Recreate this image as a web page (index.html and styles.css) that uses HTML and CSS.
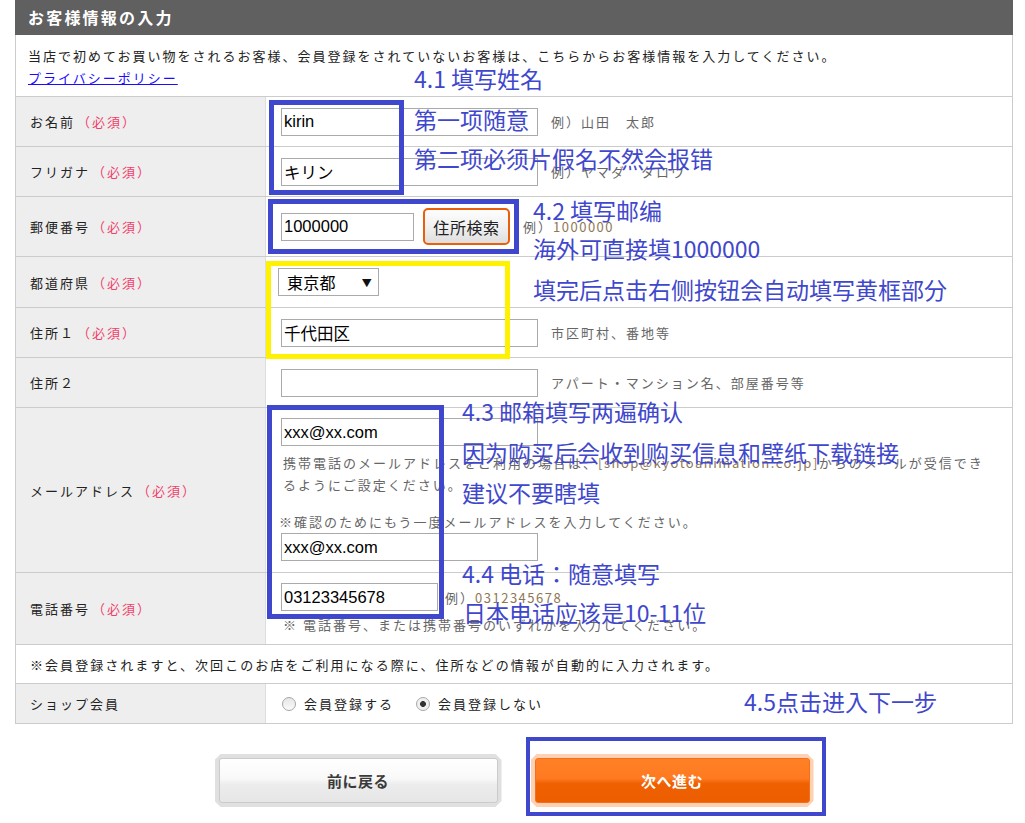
FILE: index.html
```html
<!DOCTYPE html>
<html lang="ja">
<head>
<meta charset="utf-8">
<title>お客様情報の入力</title>
<link rel="stylesheet" href="styles.css">
</head>
<body>
<div class="page">
  <div class="panel">
    <h1 class="panel-title">お客様情報の入力</h1>
    <div class="box">
      <div class="intro">
        <p>当店で初めてお買い物をされるお客様、会員登録をされていないお客様は、こちらからお客様情報を入力してください。</p>
        <a href="#" class="policy">プライバシーポリシー</a>
      </div>
      <div class="form">
        <div class="row h50">
          <div class="label">お名前<span class="req">（必須）</span></div>
          <div class="value"><input class="field w257" type="text" value="kirin" readonly><span class="ex">例）山田　太郎</span></div>
        </div>
        <div class="row h50">
          <div class="label">フリガナ<span class="req">（必須）</span></div>
          <div class="value"><input class="field w257" type="text" value="キリン" readonly><span class="ex">例）ヤマダ　タロウ</span></div>
        </div>
        <div class="row h60">
          <div class="label">郵便番号<span class="req">（必須）</span></div>
          <div class="value"><input class="field w133" type="text" value="1000000" readonly><span class="zip-btn">住所検索</span><span class="ex">例）<span class="lat">1000000</span></span></div>
        </div>
        <div class="row h51">
          <div class="label">都道府県<span class="req">（必須）</span></div>
          <div class="value"><div class="select"><span>東京都</span><span class="arrow">▼</span></div></div>
        </div>
        <div class="row h50">
          <div class="label">住所１<span class="req">（必須）</span></div>
          <div class="value"><input class="field w257" type="text" value="千代田区" readonly><span class="ex">市区町村、番地等</span></div>
        </div>
        <div class="row h50">
          <div class="label">住所２</div>
          <div class="value"><input class="field w257" type="text" value="" readonly><span class="ex">アパート・マンション名、部屋番号等</span></div>
        </div>
        <div class="row h165">
          <div class="label">メールアドレス<span class="req">（必須）</span></div>
          <div class="value stack">
            <input class="field w257" type="text" value="xxx@xx.com" readonly>
            <p class="mail-note">携帯電話のメールアドレスをご利用の場合は、<span class="lat">[shop@kyotoanimation.co.jp]</span>からのメールが受信でき<br>るようにご設定ください。</p>
            <p class="confirm-note">※確認のためにもう一度メールアドレスを入力してください。</p>
            <input class="field w257" type="text" value="xxx@xx.com" readonly>
          </div>
        </div>
        <div class="row h72">
          <div class="label">電話番号<span class="req">（必須）</span></div>
          <div class="value stack tel">
            <div class="tel-line"><input class="field w157" type="text" value="03123345678" readonly><span class="ex tel-ex">例）<span class="lat">0312345678</span></span></div>
            <p class="tel-note">※ 電話番号、または携帯番号のいずれかを入力してください。</p>
          </div>
        </div>
        <div class="row h39 full">
          <div class="notice">※会員登録されますと、次回このお店をご利用になる際に、住所などの情報が自動的に入力されます。</div>
        </div>
        <div class="row h40">
          <div class="label">ショップ会員</div>
          <div class="value radios">
            <span class="radio"></span><span class="radio-text">会員登録する</span>
            <span class="radio on"></span><span class="radio-text">会員登録しない</span>
          </div>
        </div>
      </div>
    </div>
    <div class="actions">
      <div class="btn btn-back"><div class="btn-inner">前に戻る</div></div>
      <div class="btn btn-next"><div class="btn-inner">次へ進む</div></div>
    </div>
  </div>

  <div class="mark blue m-name"></div>
  <div class="mark blue m-zip"></div>
  <div class="mark yellow m-addr"></div>
  <div class="mark blue m-mail"></div>
  <div class="mark blue thin m-next"></div>

  <div class="anno a-41">4.1 填写姓名</div>
  <div class="anno a-first">第一项随意</div>
  <div class="anno a-second">第二项必须片假名不然会报错</div>
  <div class="anno a-42">4.2 填写邮编</div>
  <div class="anno a-abroad">海外可直接填1000000</div>
  <div class="anno a-auto">填完后点击右侧按钮会自动填写黄框部分</div>
  <div class="anno a-43">4.3 邮箱填写两遍确认</div>
  <div class="anno a-why">因为购买后会收到购买信息和壁纸下载链接</div>
  <div class="anno a-dont">建议不要瞎填</div>
  <div class="anno a-44">4.4 电话：随意填写</div>
  <div class="anno a-jp">日本电话应该是10-11位</div>
  <div class="anno a-45">4.5点击进入下一步</div>
</div>
</body>
</html>
```

FILE: styles.css
```css
html, body {
  margin: 0;
  padding: 0;
  background: #fff;
}
body {
  font-family: "Noto Sans CJK JP", "Noto Sans", sans-serif;
  color: #222;
}
.page {
  position: relative;
  width: 1025px;
  height: 823px;
  overflow: hidden;
}
.panel {
  margin-left: 15px;
  width: 998px;
}
.panel-title {
  margin: 0;
  height: 35px;
  background: #606060;
  color: #fff;
  font-size: 16px;
  font-weight: bold;
  letter-spacing: 2.2px;
  line-height: 35px;
  padding-left: 13px;
}
.box {
  border-left: 1px solid #ccc;
  border-right: 1px solid #ccc;
}
.intro {
  height: 61px;
  box-sizing: border-box;
  padding: 10px 0 0 12px;
  font-size: 13px;
  letter-spacing: 2px;
  line-height: 22px;
  color: #222;
}
.intro p {
  margin: 0;
}
.policy {
  color: #1a0dff;
  text-decoration: underline;
}
.form {
  border-top: 1px solid #ccc;
}
.row {
  display: grid;
  grid-template-columns: 250px 1fr;
  border-bottom: 1px solid #ccc;
  box-sizing: border-box;
}
.h50 { height: 50px; }
.h60 { height: 60px; }
.h51 { height: 51px; }
.h165 { height: 165px; }
.h72 { height: 72px; }
.h39 { height: 39px; }
.h40 { height: 40px; }
.row.full {
  grid-template-columns: 1fr;
}
.label {
  background: #eee;
  border-right: 1px solid #ddd;
  display: flex;
  align-items: center;
  padding-left: 14px;
  font-size: 13px;
  letter-spacing: 2px;
  color: #222;
}
.req {
  color: #f0406a;
  margin-left: 2px;
}
.value {
  display: flex;
  align-items: center;
  padding-left: 15px;
  font-size: 13px;
  letter-spacing: 2px;
  color: #666;
}
.field {
  box-sizing: border-box;
  height: 28px;
  margin: 0;
  border: 1px solid #aaa;
  border-radius: 0;
  padding: 0 2px;
  font-family: "Liberation Sans", "Noto Sans CJK JP", sans-serif;
  font-size: 16.5px;
  color: #000;
  letter-spacing: 0;
  background: #fff;
  outline: none;
}
.w257 { width: 257px; }
.w133 { width: 133px; }
.w157 { width: 157px; }
.ex {
  margin-left: 13px;
  color: #666;
}
.lat {
  color: #8f7755;
  letter-spacing: 1.5px;
}
.zip-btn {
  margin-left: 9px;
  width: 87px;
  height: 37px;
  box-sizing: border-box;
  border: 2.5px solid #e8600a;
  border-radius: 5px;
  background: linear-gradient(#fdfdfd, #f1f1f1 50%, #dedede);
  font-size: 16px;
  letter-spacing: 0.6px;
  color: #222;
  display: flex;
  align-items: center;
  justify-content: center;
}
.select {
  margin-left: -3px;
  width: 101px;
  height: 28px;
  box-sizing: border-box;
  border: 1px solid #aaa;
  background: #fff;
  display: flex;
  align-items: center;
  justify-content: space-between;
  padding: 0 6px 0 8px;
  font-size: 16px;
  letter-spacing: 0.3px;
  color: #000;
}
.arrow {
  font-size: 10px;
  color: #111;
}
.stack {
  flex-direction: column;
  align-items: flex-start;
  justify-content: flex-start;
  padding-top: 10px;
  box-sizing: border-box;
}
.mail-note {
  margin: 6px 0 0 2px;
  line-height: 22px;
  white-space: nowrap;
}
.confirm-note {
  margin: 15px 0 0 -2px;
  line-height: 22px;
  white-space: nowrap;
}
.tel-line {
  display: flex;
  align-items: center;
}
.tel-ex {
  margin-left: 7px;
}
.tel-note {
  margin: 3px 0 0 2px;
  line-height: 22px;
  white-space: nowrap;
}
.notice {
  display: flex;
  align-items: center;
  padding-left: 14px;
  font-size: 13px;
  letter-spacing: 2.05px;
  color: #222;
}
.radios {
  color: #222;
}
.radio {
  width: 14px;
  height: 14px;
  box-sizing: border-box;
  border-radius: 50%;
  border: 1px solid #a6a6a6;
  background: linear-gradient(#e6e6e6, #fafafa);
  margin-left: 1px;
}
.radio.on {
  margin-left: 22px;
  background: radial-gradient(circle, #333 0 2.6px, #eee 3.2px, #f6f6f6);
}
.radio-text {
  margin-left: 8px;
}
.actions {
  display: flex;
  justify-content: center;
  align-items: center;
  gap: 29px;
  margin-top: 30px;
}
.btn {
  height: 53px;
  box-sizing: border-box;
  padding: 4px;
  clip-path: polygon(6px 0, calc(100% - 6px) 0, 100% 6px, 100% calc(100% - 6px), calc(100% - 6px) 100%, 6px 100%, 0 calc(100% - 6px), 0 6px);
}
.btn-back {
  width: 287px;
  background: #e0e0e0;
}
.btn-next {
  width: 283px;
  background: #ffd0b2;
}
.btn-inner {
  height: 100%;
  box-sizing: border-box;
  border-radius: 3px;
  display: flex;
  align-items: center;
  justify-content: center;
  font-size: 15px;
  font-weight: bold;
  letter-spacing: 0.5px;
}
.btn-back .btn-inner {
  border: 1px solid #cbcbcb;
  background: linear-gradient(#ffffff, #f9f9f9 45%, #ececec 60%, #e6e6e6);
  color: #3a3a3a;
}
.btn-next .btn-inner {
  border: 1px solid #f07020;
  background: linear-gradient(#ff8026, #ff7a20 45%, #ee6000 58%, #ec5e00);
  color: #fff;
}

/* annotation overlays */
.mark {
  position: absolute;
  box-sizing: border-box;
  border: 5px solid #3f48cc;
}
.mark.yellow {
  border-color: #fff200;
}
.mark.thin {
  border-width: 4px;
}
.m-name { left: 269px; top: 100px; width: 135px; height: 95px; }
.m-zip { left: 268px; top: 199px; width: 251px; height: 55px; }
.m-addr { left: 266px; top: 261px; width: 244px; height: 98px; }
.m-mail { left: 267px; top: 405px; width: 177px; height: 214px; }
.m-next { left: 526px; top: 737px; width: 300px; height: 79px; }

.anno {
  position: absolute;
  font-family: "Noto Sans CJK SC", "Noto Sans", sans-serif;
  font-size: 23px;
  line-height: 23px;
  color: #3f48cc;
  white-space: nowrap;
}
.a-41 { left: 414px; top: 67px; }
.a-first { left: 414px; top: 108px; }
.a-second { left: 414px; top: 147px; }
.a-42 { left: 533px; top: 199px; }
.a-abroad { left: 533px; top: 237px; }
.a-auto { left: 533px; top: 278px; }
.a-43 { left: 462px; top: 400px; }
.a-why { left: 462px; top: 441px; }
.a-dont { left: 462px; top: 481px; }
.a-44 { left: 462px; top: 562px; }
.a-jp { left: 463px; top: 601px; }
.a-45 { left: 744px; top: 690px; }
```
